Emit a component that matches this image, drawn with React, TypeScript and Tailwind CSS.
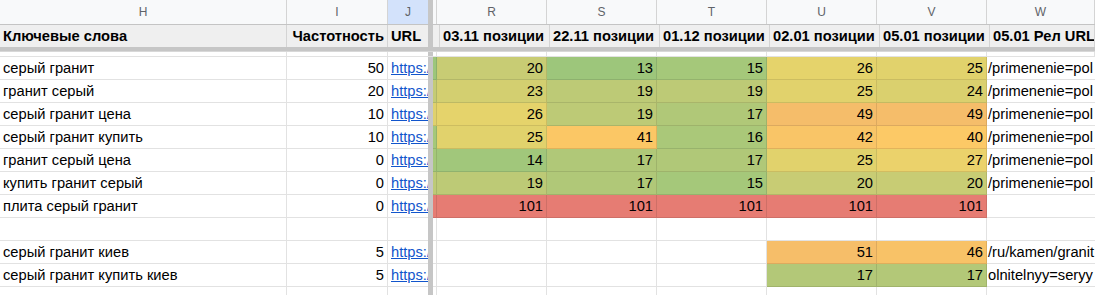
import React from "react";

const W = [
  "w-[287px]",
  "w-[101px]",
  "w-[40px]",
  "w-[5px]",
  "w-[4px]",
  "w-[110px]",
  "w-[110px]",
  "w-[110px]",
  "w-[110px]",
  "w-[110px]",
  "flex-1",
];

type Row = {
  k: string;
  f: string;
  s: string;
  v: (string | null)[];
  c: string[];
  w: string;
};

const G = "bg-[#e67c73]";

const rows: Row[] = [
  {
    k: "серый гранит",
    f: "50",
    s: "bg-[#9dc67b]",
    v: ["20", "13", "15", "26", "25"],
    c: ["bg-[#c8cc74]", "bg-[#9dc67b]", "bg-[#a5c87a]", "bg-[#e5d36b]", "bg-[#e1d26c]"],
    w: "/primenenie=pol",
  },
  {
    k: "гранит серый",
    f: "20",
    s: "bg-[#c4cb75]",
    v: ["23", "19", "19", "25", "24"],
    c: ["bg-[#d3cf70]", "bg-[#bdca76]", "bg-[#bdca76]", "bg-[#e1d26c]", "bg-[#dad06e]"],
    w: "/primenenie=pol",
  },
  {
    k: "серый гранит цена",
    f: "10",
    s: "bg-[#dfd16d]",
    v: ["26", "19", "17", "49", "49"],
    c: ["bg-[#e5d36b]", "bg-[#bdca76]", "bg-[#b0c878]", "bg-[#f5bd6a]", "bg-[#f5bd6a]"],
    w: "/primenenie=pol",
  },
  {
    k: "серый гранит купить",
    f: "10",
    s: "bg-[#a5c87a]",
    v: ["25", "41", "16", "42", "40"],
    c: ["bg-[#e1d26c]", "bg-[#fbc765]", "bg-[#aac879]", "bg-[#f9c567]", "bg-[#fcc966]"],
    w: "/primenenie=pol",
  },
  {
    k: "гранит серый цена",
    f: "0",
    s: "bg-[#a5c87a]",
    v: ["14", "17", "17", "25", "27"],
    c: ["bg-[#a1c77b]", "bg-[#b0c878]", "bg-[#b0c878]", "bg-[#e1d26c]", "bg-[#ebd26b]"],
    w: "/primenenie=pol",
  },
  {
    k: "купить гранит серый",
    f: "0",
    s: "bg-[#bdca76]",
    v: ["19", "17", "15", "20", "20"],
    c: ["bg-[#bdca76]", "bg-[#b0c878]", "bg-[#a5c87a]", "bg-[#c8cc74]", "bg-[#c8cc74]"],
    w: "/primenenie=pol",
  },
  {
    k: "плита серый гранит",
    f: "0",
    s: G,
    v: ["101", "101", "101", "101", "101"],
    c: [G, G, G, G, G],
    w: "",
  },
  { k: "", f: "", s: "", v: [null, null, null, null, null], c: ["", "", "", "", ""], w: "" },
  {
    k: "серый гранит киев",
    f: "5",
    s: "",
    v: [null, null, null, "51", "46"],
    c: ["", "", "", "bg-[#f6be69]", "bg-[#f8c267]"],
    w: "/ru/kamen/granit",
  },
  {
    k: "серый гранит купить киев",
    f: "5",
    s: "",
    v: [null, null, null, "17", "17"],
    c: ["", "", "", "bg-[#b3c878]", "bg-[#b3c878]"],
    w: "olnitelnyy=seryy",
  },
];

const letters = ["H", "I", "J", "", "", "R", "S", "T", "U", "V", "W"];
const heads = [
  "Ключевые слова",
  "Частотность",
  "URL",
  "",
  "",
  "03.11 позиции",
  "22.11 позиции",
  "01.12 позиции",
  "02.01 позиции",
  "05.01 позиции",
  "05.01 Рел URL",
];

function Bar() {
  return <div className={`${W[3]} shrink-0 self-stretch bg-[#c6c6c6]`} />;
}

export default function App() {
  return (
    <div
      className="w-[1095px] h-[295px] overflow-hidden bg-white text-[14.7px] text-black"
      style={{ fontFamily: '"Liberation Sans", Arial, sans-serif' }}
    >
      {/* column letters */}
      <div className="flex h-[25px] border-b border-[#c4c4c4] bg-[#f8f9fa]">
        {letters.map((l, i) =>
          i === 3 ? (
            <Bar key={i} />
          ) : (
            <div
              key={i}
              className={`${W[i]} shrink-0 flex items-center justify-center text-[12px] text-[#5f6368] ${
                i === 2 ? "bg-[#d3e2fb]" : "border-r border-[#d4d4d4]"
              }`}
            >
              {l}
            </div>
          )
        )}
      </div>
      {/* header row */}
      <div className="flex h-[22px] bg-[#efefef] font-bold">
        {heads.map((h, i) =>
          i === 3 ? (
            <Bar key={i} />
          ) : (
            <div
              key={i}
              className={`${W[i]} shrink-0 flex items-center overflow-hidden whitespace-nowrap px-[3px] ${
                i === 2 ? "" : "border-r border-[#d4d4d4]"
              } ${i === 1 ? "justify-end" : ""}`}
            >
              {h}
            </div>
          )
        )}
      </div>
      {/* freeze bar */}
      <div className="h-[5px] bg-[#c6c6c6] border-b border-[#d8d8d8]" />
      {/* partial row */}
      <div className="flex h-[5px] border-b border-[#e2e2e2]">
        {W.map((w, i) =>
          i === 3 ? (
            <Bar key={i} />
          ) : (
            <div key={i} className={`${w} shrink-0 ${i === 2 ? "" : "border-r border-[#e2e2e2]"}`} />
          )
        )}
      </div>
      {rows.map((r, ri) => (
        <div key={ri} className="flex h-[23px]">
          <div className={`${W[0]} shrink-0 flex items-center px-[3px] border-r border-b border-[#e2e2e2] whitespace-nowrap`}>
            {r.k}
          </div>
          <div className={`${W[1]} shrink-0 flex items-center justify-end px-[3px] border-r border-b border-[#e2e2e2]`}>
            {r.f}
          </div>
          <div className={`${W[2]} shrink-0 flex items-center pl-[3px] border-b border-[#e2e2e2] overflow-hidden whitespace-nowrap`}>
            {r.k ? <span className="text-[#1155cc] underline">https://</span> : null}
          </div>
          <Bar />
          <div
            className={`${W[4]} shrink-0 border-r border-b ${
              r.s ? `${r.s} border-black/10` : "border-[#e2e2e2]"
            }`}
          />
          {r.v.map((v, vi) => (
            <div
              key={vi}
              className={`${W[5 + vi]} shrink-0 flex items-center justify-end pr-[3px] border-r border-b ${
                r.c[vi] ? `${r.c[vi]} border-black/10` : "border-[#e2e2e2]"
              }`}
            >
              {v}
            </div>
          ))}
          <div className="flex-1 flex items-center overflow-hidden whitespace-nowrap pl-[1px] border-b border-[#e2e2e2]">
            {r.w}
          </div>
        </div>
      ))}
      <div className="flex h-[10px]">
        {W.map((w, i) =>
          i === 3 ? (
            <Bar key={i} />
          ) : (
            <div key={i} className={`${w} shrink-0 ${i === 2 || i === 10 ? "" : "border-r border-[#e2e2e2]"}`} />
          )
        )}
      </div>
    </div>
  );
}
